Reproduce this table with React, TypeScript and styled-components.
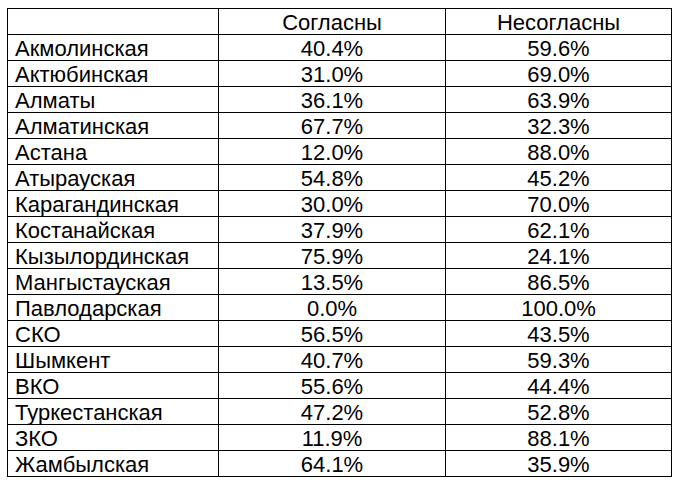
import React from "react";
import styled, { createGlobalStyle } from "styled-components";

const GlobalStyle = createGlobalStyle`
  html, body {
    margin: 0;
    padding: 0;
    background: #fff;
  }
`;

const Page = styled.div`
  padding: 8px 0 0 7px;
`;

const Table = styled.table`
  border-collapse: collapse;
  table-layout: fixed;
  font-family: "Liberation Sans", Arial, sans-serif;
  font-size: 22px;
  color: #000;
`;

const Cell = styled.td<{ $align?: "left" | "center" }>`
  box-sizing: border-box;
  height: 26px;
  padding: ${(p) => (p.$align === "left" ? "2px 0 0 7px" : "2px 0 0 0")};
  border: 1px solid #000;
  text-align: ${(p) => p.$align ?? "center"};
  line-height: 23px;
  white-space: nowrap;
  vertical-align: middle;
`;

const rows: [string, string, string][] = [
  ["Акмолинская", "40.4%", "59.6%"],
  ["Актюбинская", "31.0%", "69.0%"],
  ["Алматы", "36.1%", "63.9%"],
  ["Алматинская", "67.7%", "32.3%"],
  ["Астана", "12.0%", "88.0%"],
  ["Атырауская", "54.8%", "45.2%"],
  ["Карагандинская", "30.0%", "70.0%"],
  ["Костанайская", "37.9%", "62.1%"],
  ["Кызылординская", "75.9%", "24.1%"],
  ["Мангыстауская", "13.5%", "86.5%"],
  ["Павлодарская", "0.0%", "100.0%"],
  ["СКО", "56.5%", "43.5%"],
  ["Шымкент", "40.7%", "59.3%"],
  ["ВКО", "55.6%", "44.4%"],
  ["Туркестанская", "47.2%", "52.8%"],
  ["ЗКО", "11.9%", "88.1%"],
  ["Жамбылская", "64.1%", "35.9%"],
];

export default function App() {
  return (
    <>
      <GlobalStyle />
      <Page>
        <Table>
          <colgroup>
            <col style={{ width: 211 }} />
            <col style={{ width: 227 }} />
            <col style={{ width: 226 }} />
          </colgroup>
          <thead>
            <tr>
              <Cell $align="left"></Cell>
              <Cell>Согласны</Cell>
              <Cell>Несогласны</Cell>
            </tr>
          </thead>
          <tbody>
            {rows.map(([region, yes, no]) => (
              <tr key={region}>
                <Cell $align="left">{region}</Cell>
                <Cell>{yes}</Cell>
                <Cell>{no}</Cell>
              </tr>
            ))}
          </tbody>
        </Table>
      </Page>
    </>
  );
}
